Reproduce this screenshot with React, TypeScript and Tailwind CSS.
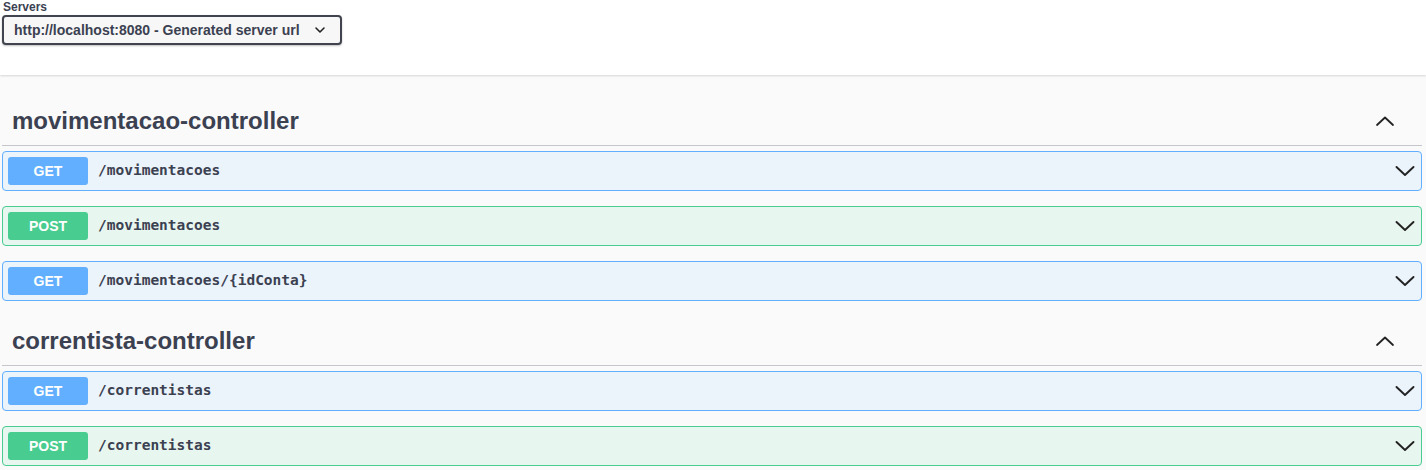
import React from "react";

const Down = ({ size = 20 }: { size?: number }) => (
  <svg width={size} height={size} viewBox="0 0 20 20" fill="none">
    <path d="M1.5 6 L10 14 L18.5 6" stroke="#222" strokeWidth="1.9" strokeLinecap="round" strokeLinejoin="round" />
  </svg>
);

const Up = () => (
  <svg width={20} height={20} viewBox="0 0 20 20" fill="none">
    <path d="M2 14 L10 6.5 L18 14" stroke="#222" strokeWidth="1.8" strokeLinecap="round" strokeLinejoin="round" />
  </svg>
);

type Op = { method: "GET" | "POST"; path: string };

const Row = ({ op }: { op: Op }) => {
  const get = op.method === "GET";
  return (
    <div
      className={
        get
          ? "h-[40px] mb-[15px] flex items-center pl-[5px] pr-[5px] rounded-[4px] border border-[#61affe] bg-[#ebf3fb]"
          : "h-[40px] mb-[15px] flex items-center pl-[5px] pr-[5px] rounded-[4px] border border-[#49cc90] bg-[#e8f6f0]"
      }
    >
      <div
        className={
          get
            ? "w-[80px] h-[28px] rounded-[3px] bg-[#61affe] text-white text-[14px] font-bold flex items-center justify-center"
            : "w-[80px] h-[28px] rounded-[3px] bg-[#49cc90] text-white text-[14px] font-bold flex items-center justify-center"
        }
        style={{ fontFamily: '"Liberation Sans", Arial, sans-serif' }}
      >
        {op.method}
      </div>
      <div
        className="ml-[10px] text-[14.5px] font-bold text-[#3b4151] flex-1"
        style={{ fontFamily: '"DejaVu Sans Mono", "Liberation Mono", monospace' }}
      >
        {op.path}
      </div>
      <div className="mr-[1px] flex items-center">
        <Down />
      </div>
    </div>
  );
};

const Tag = ({ name, ops }: { name: string; ops: Op[] }) => (
  <div>
    <div className="h-[50px] flex items-center justify-between pl-[10px] pr-[27px] border-b border-[#c4c6cb] mb-[5px]">
      <h3 className="text-[24px] font-bold text-[#3b4151]">{name}</h3>
      <Up />
    </div>
    {ops.map((o, i) => (
      <Row key={i} op={o} />
    ))}
  </div>
);

export default function App() {
  return (
    <div
      className="w-[1426px] h-[470px] overflow-hidden bg-[#fafafa] text-[#3b4151]"
      style={{ fontFamily: '"Liberation Sans", Arial, sans-serif' }}
    >
      <div className="h-[75px] bg-white shadow-[0_1px_2px_0_rgba(0,0,0,0.15)] relative">
        <div className="pl-[3px] pt-0 text-[12px] font-bold leading-[14px] text-[#3b4151]">Servers</div>
        <div className="ml-[2px] mt-[1px] w-[340px] h-[30px] border-2 border-[#41444e] rounded-[4px] bg-[#f7f7f7] shadow-[0_1px_2px_0_rgba(0,0,0,0.25)] flex items-center pl-[10px] pr-[14px] justify-between">
          <span className="text-[14px] font-bold text-[#3b4151]">http://localhost:8080 - Generated server url</span>
          <svg width="12" height="12" viewBox="0 0 12 12" fill="none">
            <path d="M2 4 L6 8 L10 4" stroke="#222" strokeWidth="1.6" strokeLinecap="round" strokeLinejoin="round" />
          </svg>
        </div>
      </div>
      <div className="pl-[2px] pr-[4px] pt-[21px]">
        <Tag
          name="movimentacao-controller"
          ops={[
            { method: "GET", path: "/movimentacoes" },
            { method: "POST", path: "/movimentacoes" },
            { method: "GET", path: "/movimentacoes/{idConta}" },
          ]}
        />
        <Tag
          name="correntista-controller"
          ops={[
            { method: "GET", path: "/correntistas" },
            { method: "POST", path: "/correntistas" },
          ]}
        />
      </div>
    </div>
  );
}
